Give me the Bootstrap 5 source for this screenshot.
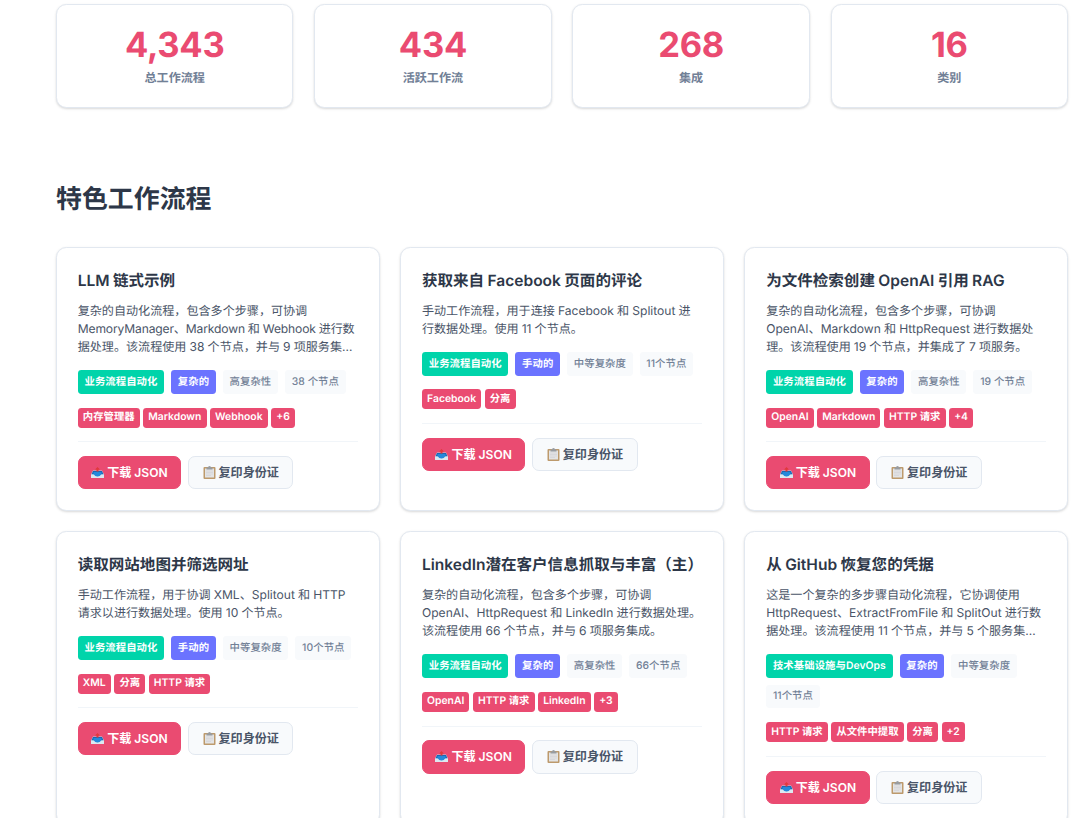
<!DOCTYPE html>
<html lang="zh-CN">

<head>
	<meta charset="UTF-8">
	<meta name="viewport" content="width=device-width, initial-scale=1.0">
	<title>特色工作流程</title>
	<link href="https://cdn.jsdelivr.net/npm/bootstrap@5.3.3/dist/css/bootstrap.min.css" rel="stylesheet">
	<script src="https://cdn.jsdelivr.net/npm/bootstrap@5.3.3/dist/js/bootstrap.bundle.min.js"></script>
	<style>
		html { font-size: 13.82px; overflow: hidden; }
		body {
			font-family: Inter, "Noto Sans CJK SC", sans-serif;
			line-height: 1.6;
			color: #2d3748;
			background: #fff;
			text-rendering: geometricPrecision;
		}
		.page { padding: 4px 12px 0 56px; }
		.card {
			--bs-card-border-color: #e2e8f0;
			--bs-card-border-radius: .75rem;
			color: inherit;
			box-shadow: 0 1px 3px rgba(0, 0, 0, .1), 0 1px 2px rgba(0, 0, 0, .06);
		}
		.stat-card { padding: 1.65rem 1.5rem 1.35rem; }
		.stat-number { font-size: 2.5rem; line-height: 1.04; letter-spacing: -.3px; margin-bottom: .33rem; color: #ea4b71; }
		.stat-label { font-size: .875rem; margin-bottom: .07rem; color: #718096; }
		.section-title { font-size: 1.875rem; line-height: 1.6; margin: 71px 0 26.4px; }
		.flow-grid { display: grid; grid-template-columns: repeat(3, minmax(0, 1fr)); }
		.flow-card { padding: 1.56rem 1.5rem 1.46rem; }
		.flow-title { font-size: 1.125rem; line-height: 1.4; word-spacing: -.5px; margin-bottom: .77rem; }
		.flow-text { font-size: .875rem; line-height: 1.5; word-spacing: -.3px; color: #4a5568; }
		.tight { letter-spacing: -.14px; }
		.chip { font-size: .75rem; letter-spacing: .06px; padding: .25rem .49rem; border-radius: .25rem; background: #f8fafc; color: #718096; }
		.chip-category { background: #00d4aa; color: #fff; }
		.chip-trigger { background: #6b73ff; color: #fff; }
		.service { font-size: .75rem; padding: .125rem .37rem; border-radius: .25rem; background: #ea4b71; color: #fff; }
		.flow-actions { border-top: 1px solid #f1f5f9; }
		.flow-btn {
			--bs-btn-font-size: .875rem;
			--bs-btn-line-height: 1.6;
			--bs-btn-padding-x: .9rem;
			--bs-btn-padding-y: .43rem;
			--bs-btn-border-radius: .5rem;
			--bs-btn-font-weight: 600;
		}
		.flow-btn-download {
			--bs-btn-bg: #ea4b71;
			--bs-btn-color: #fff;
			--bs-btn-border-color: #ea4b71;
			--bs-btn-hover-bg: #d63c62;
			--bs-btn-hover-color: #fff;
		}
		.flow-btn-copy {
			--bs-btn-padding-x: .98rem;
			--bs-btn-bg: #f8fafc;
			--bs-btn-color: #4a5568;
			--bs-btn-border-color: #e2e8f0;
			--bs-btn-hover-bg: #edf2f7;
		}
		.flow-icon { width: 13px; height: 13px; margin-right: 3px; flex: none; }
	</style>
</head>

<body>
	<svg class="d-none">
		<symbol id="icon-inbox" viewBox="0 0 26 26">
			<path d="M4 9h18l4 8v6q0 1-1 1H1q-1 0-1-1v-6z" fill="#b9d2e3" />
			<path d="M4 10h18l3 7H1z" fill="#1768b4" />
			<path d="M0 17h8q1 4 5 4t5-4h8v6q0 1-1 1H1q-1 0-1-1z" fill="#dce8f0" />
			<path d="M5 12h16v4q-3 5-8 5t-8-5z" fill="#2488db" />
			<path d="M13 2l5 5h-3v4h-4V7H8z" fill="#e03a3d" />
		</symbol>
		<symbol id="icon-clipboard" viewBox="0 0 26 26">
			<rect x="1" y="2" width="24" height="24" rx="2" fill="#bd9a6c" />
			<rect x="4" y="5" width="18" height="18" fill="#e3e4e5" />
			<path d="M6 10h14M6 13h14M6 16h14M6 19h10" stroke="#cccdd0" />
			<path d="M7 3h3q0-3 3-3t3 3h3v4H7z" fill="#989ca1" />
		</symbol>
	</svg>

	<main class="page">
		<section class="d-flex gap-4" id="stats"></section>
		<h2 class="section-title fw-semibold">特色工作流程</h2>
		<section class="flow-grid gap-4" id="flows"></section>
	</main>
</body>

<script>
	const stats = [
		["4,343", "总工作流程"],
		["434", "活跃工作流"],
		["268", "集成"],
		["16", "类别"]
	];

	const flows = [
		{
			title: "LLM 链式示例",
			text: ["复杂的自动化流程，包含多个步骤，可协调", "<span class=\"tight\">MemoryManager、Markdown 和 Webhook 进行数</span>", "据处理。该流程使用 38 个节点，并与 9 项服务集…"],
			chips: ["业务流程自动化", "复杂的", "高复杂性", "38 个节点"],
			services: ["内存管理器", "Markdown", "Webhook", "+6"]
		},
		{
			title: "获取来自 Facebook 页面的评论",
			text: ["手动工作流程，用于连接 Facebook 和 Splitout 进", "行数据处理。使用 11 个节点。"],
			chips: ["业务流程自动化", "手动的", "中等复杂度", "11个节点"],
			services: ["Facebook", "分离"]
		},
		{
			title: "为文件检索创建 OpenAI 引用 RAG",
			text: ["复杂的自动化流程，包含多个步骤，可协调", "OpenAI、Markdown 和 HttpRequest 进行数据处", "理。该流程使用 19 个节点，并集成了 7 项服务。"],
			chips: ["业务流程自动化", "复杂的", "高复杂性", "19 个节点"],
			services: ["OpenAI", "Markdown", "HTTP 请求", "+4"]
		},
		{
			title: "读取网站地图并筛选网址",
			text: ["手动工作流程，用于协调 XML、Splitout 和 HTTP", "请求以进行数据处理。使用 10 个节点。"],
			chips: ["业务流程自动化", "手动的", "中等复杂度", "10个节点"],
			services: ["XML", "分离", "HTTP 请求"]
		},
		{
			title: "LinkedIn潜在客户信息抓取与丰富（主）",
			text: ["复杂的自动化流程，包含多个步骤，可协调", "OpenAI、HttpRequest 和 LinkedIn 进行数据处理。", "该流程使用 66 个节点，并与 6 项服务集成。"],
			chips: ["业务流程自动化", "复杂的", "高复杂性", "66个节点"],
			services: ["OpenAI", "HTTP 请求", "LinkedIn", "+3"]
		},
		{
			title: "从 GitHub 恢复您的凭据",
			text: ["这是一个复杂的多步骤自动化流程，它协调使用", "HttpRequest、ExtractFromFile 和 SplitOut 进行数", "据处理。该流程使用 11 个节点，并与 5 个服务集…"],
			chips: ["技术基础设施与DevOps", "复杂的", "中等复杂度", "11个节点"],
			services: ["HTTP 请求", "从文件中提取", "分离", "+2"]
		}
	];

	// first chip is the category, second the trigger type
	const chipClasses = ["chip-category fw-semibold", "chip-trigger fw-semibold", "fw-medium", "fw-medium"];

	document.getElementById("stats").innerHTML = stats.map(([number, label]) => `
		<div class="card stat-card flex-fill w-100 text-center">
			<div class="stat-number fw-bold">${number}</div>
			<div class="stat-label fw-semibold">${label}</div>
		</div>`).join("");

	document.getElementById("flows").innerHTML = flows.map((flow) => `
		<article class="card flow-card">
			<h3 class="flow-title fw-semibold text-nowrap">${flow.title}</h3>
			<p class="flow-text text-nowrap mb-3">${flow.text.join("<br>")}</p>
			<div class="d-flex flex-wrap gap-2 mb-3">
				${flow.chips.map((chip, i) => `<span class="chip ${chipClasses[i]}">${chip}</span>`).join("")}
			</div>
			<div class="d-flex flex-wrap gap-1 mb-3">
				${flow.services.map((name) => `<span class="service fw-semibold">${name}</span>`).join("")}
			</div>
			<div class="flow-actions d-flex gap-2 pt-3">
				<button type="button" class="btn flow-btn flow-btn-download d-flex align-items-center text-nowrap"><svg class="flow-icon"><use href="#icon-inbox" /></svg>下载 JSON</button>
				<button type="button" class="btn flow-btn flow-btn-copy d-flex align-items-center text-nowrap"><svg class="flow-icon"><use href="#icon-clipboard" /></svg>复印身份证</button>
			</div>
		</article>`).join("");
</script>

</html>
